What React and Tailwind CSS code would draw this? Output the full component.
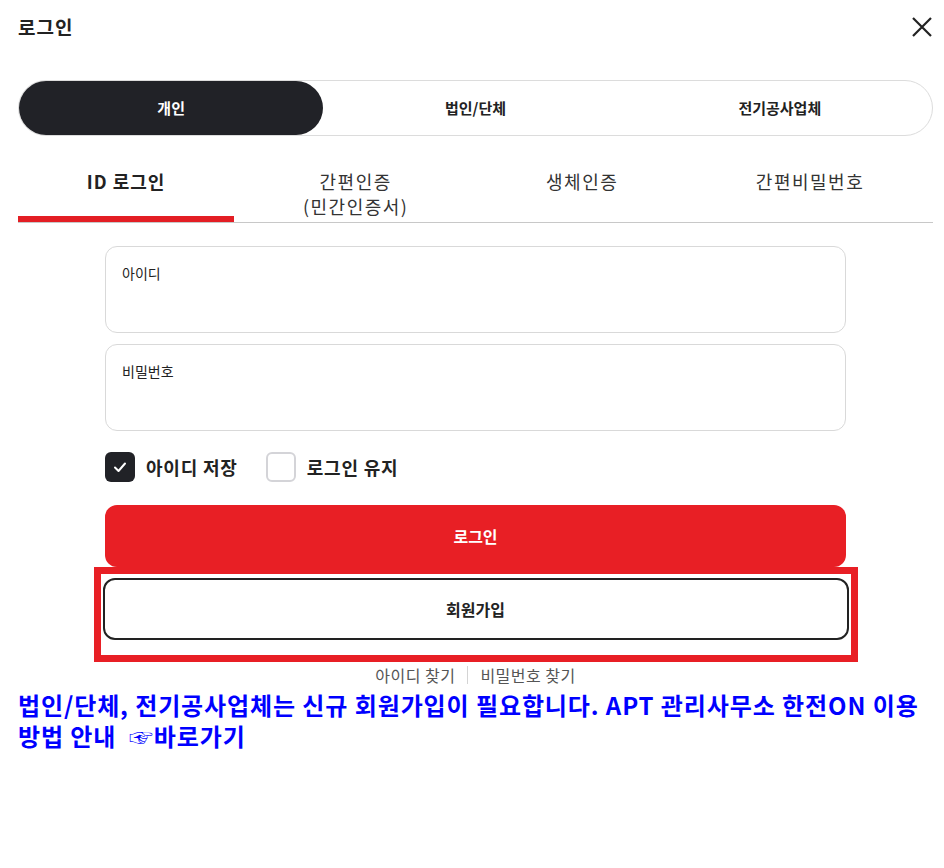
import React, { useState } from "react";

const font = { fontFamily: '"Noto Sans CJK KR", "Noto Sans", sans-serif' };

function CloseIcon() {
  return (
    <svg width="22" height="22" viewBox="0 0 22 22" fill="none" stroke="#222" strokeWidth="2.2">
      <path d="M2 2 L20 20 M20 2 L2 20" />
    </svg>
  );
}

function CheckBox({ checked, label }) {
  return (
    <label className="flex items-center gap-[11px] cursor-pointer">
      {checked ? (
        <span className="w-[30px] h-[30px] rounded-[6px] bg-[#212227] flex items-center justify-center">
          <svg width="14" height="14" viewBox="0 0 14 14" fill="none" stroke="#fff" strokeWidth="2" strokeLinecap="round" strokeLinejoin="round">
            <path d="M2 7.5 L5.5 11 L12 3.5" />
          </svg>
        </span>
      ) : (
        <span className="w-[30px] h-[30px] rounded-[6px] border-2 border-[#d4d4d8] bg-white" />
      )}
      <span className="text-[18px] tracking-[0.8px] font-bold text-[#222]">{label}</span>
    </label>
  );
}

export default function App() {
  const [type, setType] = useState("personal");

  const types = [
    { key: "personal", label: "개인" },
    { key: "corp", label: "법인/단체" },
    { key: "elec", label: "전기공사업체" },
  ];

  return (
    <div className="w-[944px] h-[868px] bg-white pl-[18px] pr-[11px] text-[#222]" style={font}>
      {/* Header */}
      <div className="flex items-center justify-between h-[54px]">
        <h1 className="text-[19px] tracking-[1px] font-bold">로그인</h1>
        <button>
          <CloseIcon />
        </button>
      </div>

      {/* User type */}
      <div className="mt-[26px] flex h-[56px] rounded-full border border-[#dcdcdc]">
        {types.map((t) => (
          <button
            key={t.key}
            onClick={() => setType(t.key)}
            className={
              "flex-1 rounded-full text-[15px] font-bold " +
              (type === t.key ? "bg-[#212227] text-white" : "text-[#222]")
            }
          >
            {t.label}
          </button>
        ))}
      </div>

      {/* Login method tabs */}
      <div className="mt-[32px] flex border-b border-[#c8c8c8] text-[18px] tracking-[1.5px] leading-[25px]">
        <div className="flex-auto relative h-[54px] text-center pt-[1px]">
          <span className="font-bold tracking-[1px]">ID 로그인</span>
          <span className="absolute left-0 right-0 bottom-0 h-[6px] bg-[#e31e24]" />
        </div>
        <div className="flex-auto h-[54px] text-center pt-[1px] text-[#333]">
          간편인증
          <br />
          (민간인증서)
        </div>
        <div className="flex-auto h-[54px] text-center pt-[1px] text-[#333]">생체인증</div>
        <div className="flex-auto h-[54px] text-center pt-[1px] text-[#333]">간편비밀번호</div>
      </div>

      {/* Form */}
      <div className="mx-auto w-[741px] mt-[23px]">
        <div className="h-[87px] rounded-[12px] border border-[#d9d9d9] px-[16px] pt-[17px]">
          <div className="text-[14px] leading-[18px]">아이디</div>
          <input className="w-full mt-[8px] outline-none text-[15px]" />
        </div>
        <div className="mt-[11px] h-[87px] rounded-[12px] border border-[#d9d9d9] px-[16px] pt-[17px]">
          <div className="text-[14px] leading-[18px]">비밀번호</div>
          <input type="password" className="w-full mt-[8px] outline-none text-[15px]" />
        </div>

        <div className="mt-[21px] flex items-center gap-[28px]">
          <CheckBox checked label="아이디 저장" />
          <CheckBox label="로그인 유지" />
        </div>

        <button className="mt-[23px] w-full h-[62px] rounded-[12px] bg-[#e81f25] text-white text-[16px] font-bold">
          로그인
        </button>
      </div>

      {/* Highlighted signup */}
      <div className="mx-auto w-[764px] border-[7px] border-[#e81f25] px-[2px] pt-[4px] pb-[15px]">
        <button className="w-full h-[62px] rounded-[12px] border-2 border-[#222] bg-white text-[16px] font-bold">
          회원가입
        </button>
      </div>

      <div className="mt-[2px] flex justify-center items-center text-[16px] tracking-[0.5px] text-[#555] leading-[22px]">
        <a className="pr-[12px]">아이디 찾기</a>
        <span className="w-px h-[18px] bg-[#d4d4d4]" />
        <a className="pl-[12px]">비밀번호 찾기</a>
      </div>

      <p className="mt-[3px] text-[24px] tracking-[0.9px] font-bold leading-[31px] text-[#0000ff] break-keep">
        법인/단체, 전기공사업체는 신규 회원가입이 필요합니다. APT 관리사무소 한전ON 이용 방법 안내 &nbsp;☞바로가기
      </p>
    </div>
  );
}
